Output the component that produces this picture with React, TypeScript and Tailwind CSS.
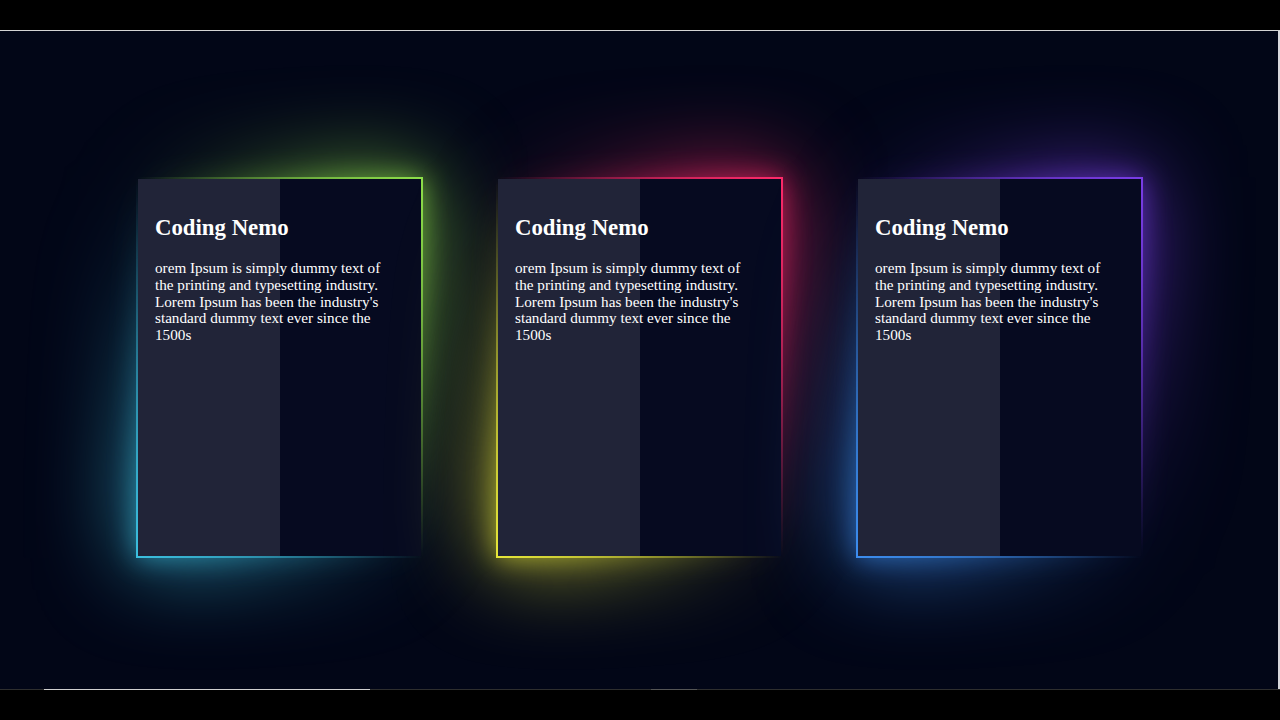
const cards = [
  { id: 1, glow: 'from-[#3cc0e0] via-transparent to-[#8ee04a]' },
  { id: 2, glow: 'from-[#e8e83a] via-transparent to-[#ff2a6a]' },
  { id: 3, glow: 'from-[#3d8ef0] via-transparent to-[#7a3de8]' },
];

function NeonCard({ glow }: { glow: string }) {
  return (
    <div className="relative w-[287px] h-[381px] shrink-0">
      {/* wide glow */}
      <div className={`absolute inset-0 bg-gradient-to-tr ${glow} blur-[48px]`} />
      {/* tight glow */}
      <div className={`absolute inset-0 bg-gradient-to-tr ${glow} blur-[14px] opacity-70`} />
      {/* border */}
      <div className={`absolute inset-0 bg-gradient-to-tr ${glow}`} />
      {/* body */}
      <div className="absolute inset-[2px] bg-[#060a20] flex">
        <div className="w-1/2 h-full bg-white/[0.11]" />
      </div>
      {/* content */}
      <div className="relative pt-[38px] pl-[19px] w-[257px] text-white">
        <h2 className="text-[22.8px] leading-[26px] font-bold">Coding Nemo</h2>
        <p className="mt-[19px] text-[15.2px] leading-[16.8px]">
          orem Ipsum is simply dummy text of the printing and typesetting industry. Lorem Ipsum has been the
          industry's standard dummy text ever since the 1500s
        </p>
      </div>
    </div>
  );
}

export default function App() {
  return (
    <div className="w-[1280px] h-[720px] bg-black flex flex-col overflow-hidden font-['Liberation_Serif','Times_New_Roman',serif]">
      <div className="h-[30px] bg-black" />
      <div className="h-px bg-[#d4d4d4]" />
      <div className="h-[658px] bg-[#020617] border-r-2 border-[#d8d8dc] flex justify-center items-start pt-[146px] pl-[1px] gap-[73px]">
        {cards.map((c) => (
          <NeonCard key={c.id} glow={c.glow} />
        ))}
      </div>
      {/* progress line */}
      <div className="h-px flex bg-[#2e2e2e]">
        <div className="w-[44px]" />
        <div className="w-[326px] bg-[#d0d0d0]" />
        <div className="w-[281px]" />
        <div className="w-[46px] bg-[#555555]" />
      </div>
      <div className="flex-1 bg-black" />
    </div>
  );
}
